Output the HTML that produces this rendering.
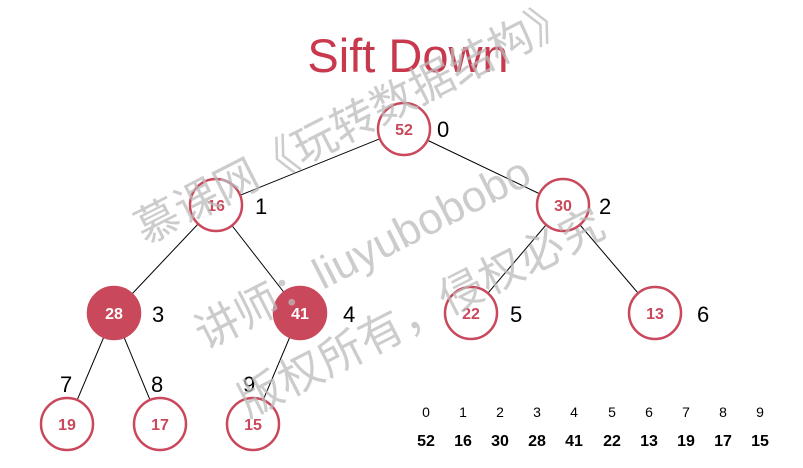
<!DOCTYPE html>
<html><head><meta charset="utf-8"><style>
html,body{margin:0;padding:0;background:#fff;}
svg{display:block;}
text{font-family:"Liberation Sans","Noto Sans CJK SC",sans-serif;}
</style></head><body>
<svg width="803" height="468" viewBox="0 0 803 468">
<text x="408" y="72" font-size="47" fill="#c9394d" text-anchor="middle">Sift Down</text>
<g stroke="#000" stroke-width="1">
<line x1="404" y1="129" x2="216" y2="205"/><line x1="404" y1="129" x2="563" y2="205"/>
<line x1="216" y1="205" x2="114" y2="313"/><line x1="216" y1="205" x2="300" y2="313"/>
<line x1="563" y1="205" x2="471" y2="313"/><line x1="563" y1="205" x2="655" y2="313"/>
<line x1="114" y1="313" x2="67" y2="424"/><line x1="114" y1="313" x2="160" y2="424"/>
<line x1="300" y1="313" x2="253" y2="424"/>
</g>
<g stroke="#c9485b" stroke-width="2.5" fill="#fff">
<circle cx="404" cy="129" r="26"/><circle cx="216" cy="205" r="26"/><circle cx="563" cy="205" r="26"/>
<circle cx="114" cy="313" r="26" fill="#c9485b"/><circle cx="300" cy="313" r="26" fill="#c9485b"/>
<circle cx="471" cy="313" r="26"/><circle cx="655" cy="313" r="26"/>
<circle cx="67" cy="424" r="26"/><circle cx="160" cy="424" r="26"/><circle cx="253" cy="424" r="26"/>
</g>
<g font-size="16" font-weight="bold" text-anchor="middle" fill="#c9485b">
<text x="404" y="135">52</text><text x="216" y="211">16</text><text x="563" y="211">30</text>
<text x="114" y="319" fill="#fff">28</text><text x="300" y="319" fill="#fff">41</text>
<text x="471" y="319">22</text><text x="655" y="319">13</text>
<text x="67" y="430">19</text><text x="160" y="430">17</text><text x="253" y="430">15</text>
</g>
<g font-size="22" fill="#000">
<text x="437" y="137">0</text><text x="255" y="214">1</text><text x="599" y="214">2</text>
<text x="152" y="322">3</text><text x="343" y="322">4</text><text x="510" y="322">5</text><text x="697" y="322">6</text>
<text x="60" y="392">7</text><text x="151" y="392">8</text><text x="243" y="392">9</text>
</g>
<g font-size="14" text-anchor="middle" fill="#000">
<text x="426" y="417">0</text><text x="463" y="417">1</text><text x="500" y="417">2</text><text x="537" y="417">3</text><text x="574" y="417">4</text><text x="612" y="417">5</text><text x="649" y="417">6</text><text x="686" y="417">7</text><text x="723" y="417">8</text><text x="760" y="417">9</text>
</g>
<g font-size="16" font-weight="bold" text-anchor="middle" fill="#000">
<text x="426" y="446">52</text><text x="463" y="446">16</text><text x="500" y="446">30</text><text x="537" y="446">28</text><text x="574" y="446">41</text><text x="612" y="446">22</text><text x="649" y="446">13</text><text x="686" y="446">19</text><text x="723" y="446">17</text><text x="760" y="446">15</text>
</g>
<g fill="#bbbbbb" font-size="44" opacity="0.75">
<text transform="translate(145,245) rotate(-27)">慕课网《玩转数据结构》</text>
<text transform="translate(205,350) rotate(-27)">讲师：liuyubobobo</text>
<text transform="translate(248,418) rotate(-27)" letter-spacing="1">版权所有，侵权必究</text>
</g>
</svg>
</body></html>
